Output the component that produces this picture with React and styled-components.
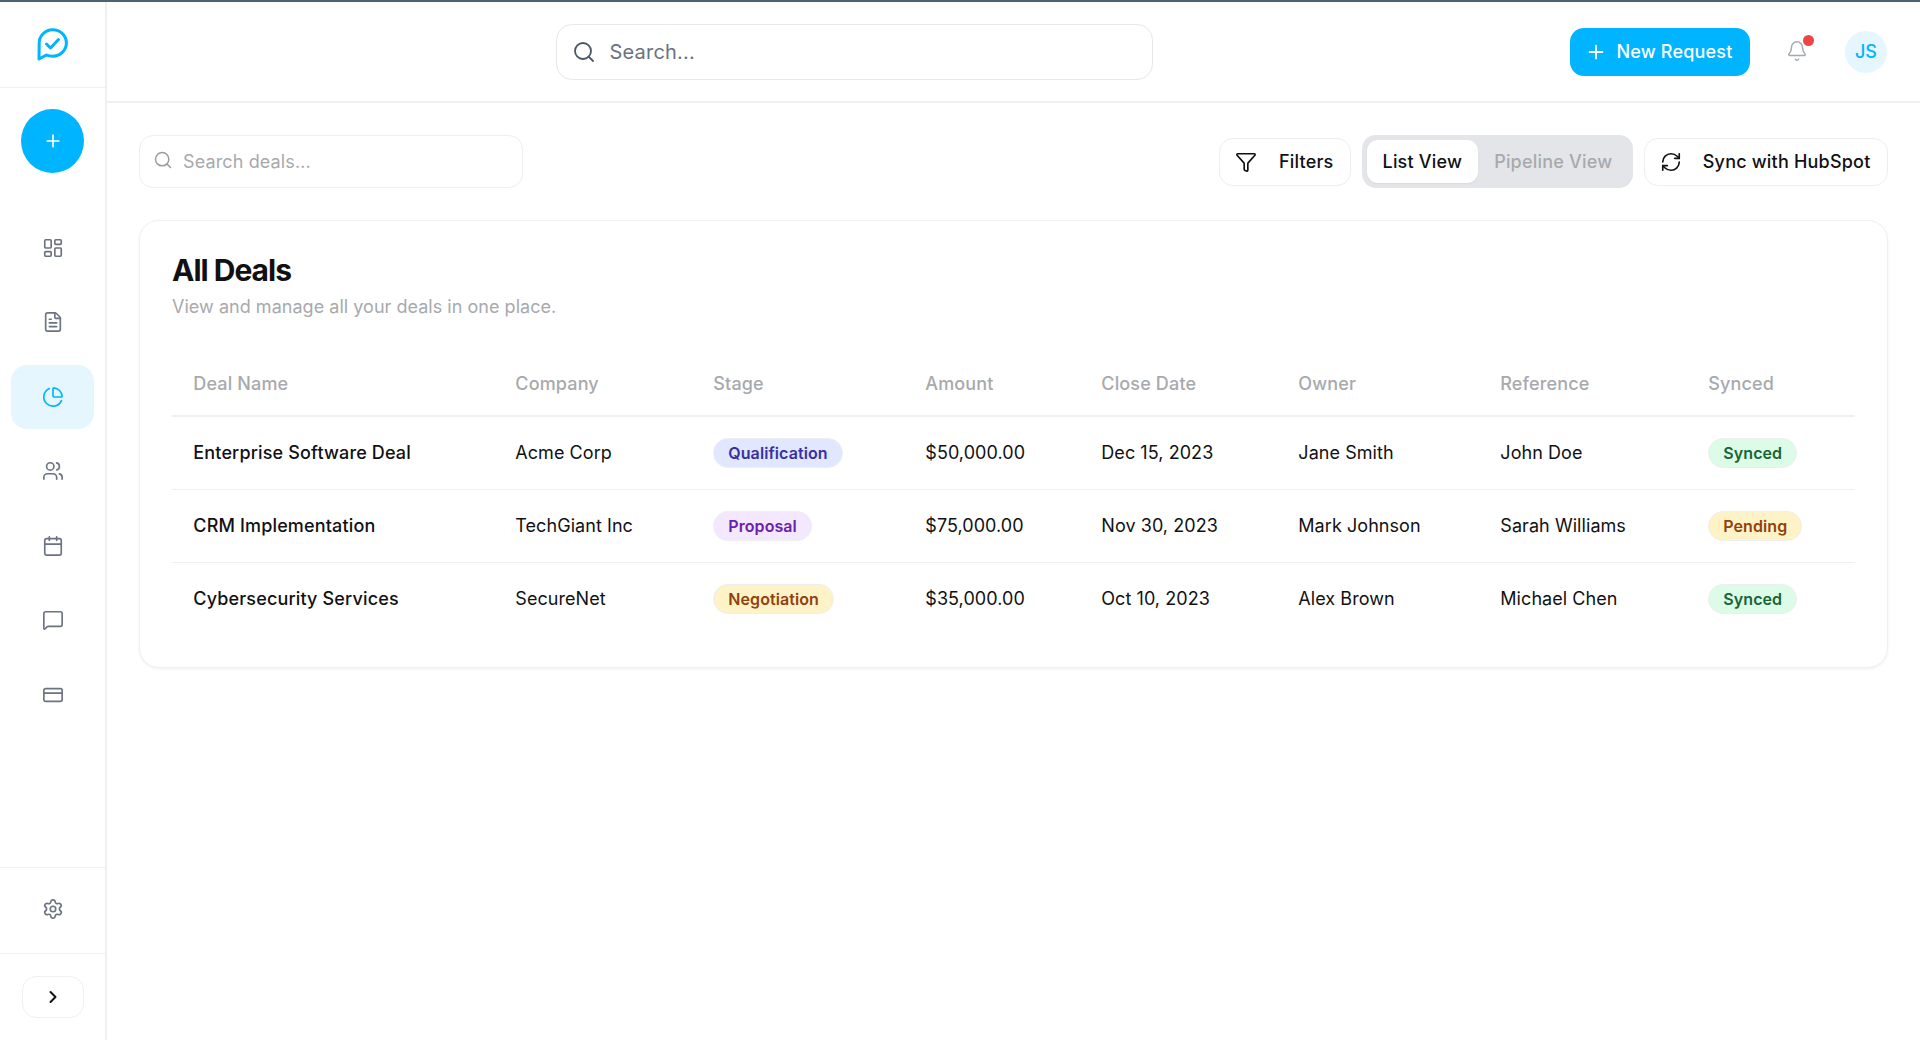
import React from "react";
import styled, { createGlobalStyle } from "styled-components";
import {
  Plus, LayoutDashboard, FileText, ChartPie, Users, Calendar, MessageSquare,
  CreditCard, Settings, ChevronRight, Search, Bell, Funnel, RefreshCw,
} from "lucide-react";

const Global = createGlobalStyle`
  * { box-sizing: border-box; }
  html, body { margin: 0; height: 100%; background: #fff; }
  #root { height: 100%; }
  body { font-family: Inter, "Noto Sans", "Liberation Sans", sans-serif; color: #111113; }
`;

const Page = styled.div`
  height: 1040px;
  display: flex;
  flex-direction: column;
  overflow: hidden;
`;
const TopEdge = styled.div`
  height: 2px;
  flex: none;
  background: #4d6270;
`;
const Body = styled.div`
  flex: 1;
  display: flex;
  min-height: 0;
`;
const Sidebar = styled.aside`
  width: 107px;
  flex: none;
  display: flex;
  flex-direction: column;
  border-right: 2px solid #f0f0f2;
`;
const LogoBox = styled.div`
  height: 86px;
  flex: none;
  display: flex;
  align-items: center;
  justify-content: center;
  padding-right: 2px;
  border-bottom: 1.5px solid #f0f0f2;
`;
const AddCircle = styled.button`
  width: 63px;
  height: 64px;
  margin: 21px auto 0;
  flex: none;
  border: 0;
  border-radius: 50%;
  background: #00b4ff;
  color: #fff;
  display: flex;
  align-items: center;
  justify-content: center;
`;
const Nav = styled.nav`
  flex: 1;
  display: flex;
  flex-direction: column;
  gap: 10.6px;
  padding: 42.5px 11px 0;
`;
const NavItem = styled.a`
  height: 64px;
  flex: none;
  border-radius: 16px;
  display: flex;
  align-items: center;
  justify-content: center;
  color: ${(p) => (p.$active ? "#00b4ff" : "#6b7280")};
  background: ${(p) => (p.$active ? "#e5f6ff" : "transparent")};
`;
const SettingsBox = styled.div`
  height: 87px;
  flex: none;
  display: flex;
  align-items: center;
  justify-content: center;
  padding-bottom: 2px;
  color: #6b7280;
  border-top: 1.5px solid #f0f0f2;
  border-bottom: 1.5px solid #f0f0f2;
`;
const CollapseBox = styled.div`
  height: 86.5px;
  flex: none;
  display: flex;
  align-items: flex-start;
  justify-content: center;
  padding-top: 22px;
`;
const CollapseButton = styled.button`
  width: 62px;
  height: 42px;
  border: 1.5px solid #f0f0f2;
  border-radius: 14px;
  background: #fff;
  color: #111113;
  display: flex;
  align-items: center;
  justify-content: center;
  padding: 0;
`;
const Main = styled.main`
  flex: 1;
  min-width: 0;
  display: flex;
  flex-direction: column;
`;
const Header = styled.header`
  height: 101px;
  flex: none;
  display: flex;
  align-items: center;
  padding: 0 33px 0 448.5px;
  border-bottom: 2px solid #f0f0f2;
`;
const HeaderSearch = styled.label`
  width: 597px;
  height: 56px;
  display: flex;
  align-items: center;
  gap: 14px;
  padding: 0 15px;
  border: 1.5px solid #e8e8eb;
  border-radius: 16px;
  color: #4b5563;
`;
const HeaderInput = styled.input`
  flex: 1;
  min-width: 0;
  border: 0;
  outline: 0;
  background: none;
  padding: 0;
  font: 400 20px Inter, sans-serif;
  letter-spacing: 0.2px;
  &::placeholder { color: #6b7280; opacity: 1; }
`;
const HeaderActions = styled.div`
  margin-left: auto;
  display: flex;
  align-items: center;
`;
const PrimaryButton = styled.button`
  width: 180px;
  height: 48px;
  border: 0;
  border-radius: 14px;
  padding: 0 2px 0 0;
  background: #00b4ff;
  color: #fff;
  font: 500 18px Inter, sans-serif;
  letter-spacing: 0.2px;
  display: flex;
  align-items: center;
  justify-content: center;
  gap: 9px;
`;
const BellWrap = styled.div`
  position: relative;
  width: 24px;
  height: 24px;
  margin: 1px 35px 0 36px;
  color: #a3a7ae;
`;
const RedDot = styled.span`
  position: absolute;
  top: -5px;
  right: -4px;
  width: 11px;
  height: 11px;
  border-radius: 50%;
  background: #ef4444;
`;
const Avatar = styled.div`
  width: 42px;
  height: 42px;
  border-radius: 50%;
  background: #e5f6ff;
  color: #00b4ff;
  font: 500 18px Inter, sans-serif;
  display: flex;
  align-items: center;
  justify-content: center;
`;
const Content = styled.div`
  padding: 32px 32.5px 32px 32px;
  display: flex;
  flex-direction: column;
  gap: 32px;
`;
const Toolbar = styled.div`
  height: 53px;
  display: flex;
  align-items: center;
  justify-content: space-between;
`;
const DealSearch = styled.label`
  width: 384px;
  height: 53px;
  display: flex;
  align-items: center;
  gap: 10px;
  padding: 0 13px 0 13px;
  border: 1.5px solid #eeeef0;
  border-radius: 14px;
  color: #9b9ca1;
  & > svg { margin-top: -4px; }
`;
const DealInput = styled.input`
  flex: 1;
  min-width: 0;
  border: 0;
  outline: 0;
  background: none;
  padding: 0;
  font: 400 18px Inter, sans-serif;
  letter-spacing: 0.12px;
  &::placeholder { color: #a8a9ad; opacity: 1; }
`;
const ToolGroup = styled.div`
  display: flex;
  align-items: center;
  gap: 11px;
`;
const OutlineButton = styled.button`
  height: 48px;
  width: ${(p) => p.$width}px;
  border: 1.5px solid #eeeef0;
  border-radius: 14px;
  background: #fff;
  color: #111113;
  font: 500 18px Inter, sans-serif;
  letter-spacing: 0.2px;
  white-space: nowrap;
  display: flex;
  align-items: center;
  justify-content: space-between;
  padding: 0 16px 0 15.5px;
`;
const Segment = styled.div`
  width: 271px;
  height: 53px;
  padding: 5px;
  border-radius: 14px;
  background: #e4e5e8;
  display: flex;
  align-items: center;
`;
const SegmentTab = styled.button`
  height: 43px;
  flex: none;
  padding: 0 16px;
  border: 0;
  border-radius: 11px;
  background: ${(p) => (p.$active ? "#fff" : "transparent")};
  box-shadow: ${(p) => (p.$active ? "0 1px 2px rgba(0,0,0,.05)" : "none")};
  color: ${(p) => (p.$active ? "#111113" : "#a8a9ad")};
  font: 500 18px Inter, sans-serif;
  letter-spacing: 0.2px;
  white-space: nowrap;
`;
const Card = styled.section`
  height: 448px;
  padding: 32px;
  border: 1.5px solid #f0f0f2;
  border-radius: 20px;
  background: #fff;
  box-shadow: 0 1px 3px rgba(0, 0, 0, 0.06);
`;
const Title = styled.h1`
  margin: 0;
  font: 700 30px/34px Inter, sans-serif;
  letter-spacing: -1px;
  color: #111113;
`;
const Subtitle = styled.p`
  margin: 8px 0 0;
  font: 400 18px/24px Inter, sans-serif;
  letter-spacing: 0.03px;
  color: #a8a9ad;
`;
const Table = styled.table`
  width: 100%;
  margin-top: 33px;
  border-collapse: collapse;
  table-layout: fixed;
`;
const Col = styled.col`
  width: ${(p) => p.$w}px;
`;
const Th = styled.th`
  height: 64px;
  padding: 0 20px 0 21.3px;
  text-align: left;
  font: 500 18px Inter, sans-serif;
  letter-spacing: 0.15px;
  color: #a8a9ad;
  border-bottom: 2px solid #f0f0f2;
`;
const Tr = styled.tr`
  height: 73px;
  & + & td { border-top: 1.5px solid #f0f0f2; }
`;
const Td = styled.td`
  padding: 0 20px 0 21.3px;
  font: ${(p) => (p.$strong ? 500 : 400)} 18px Inter, sans-serif;
  letter-spacing: ${(p) => (p.$strong ? 0.15 : 0.06)}px;
  color: #111113;
  white-space: nowrap;
`;
const tones = {
  blue: ["#e0e7ff", "#3730a3"],
  purple: ["#f3e8ff", "#6b21a8"],
  amber: ["#fef3c7", "#92400e"],
  green: ["#dcfce7", "#166534"],
};
const Badge = styled.span`
  display: inline-flex;
  align-items: center;
  height: 30px;
  padding: 0 14px;
  border-radius: 15px;
  border: 1.5px solid #eeeef0;
  font: 600 16px Inter, sans-serif;
  letter-spacing: 0.08px;
  background: ${(p) => tones[p.$tone][0]};
  color: ${(p) => tones[p.$tone][1]};
`;

const Logo = () => (
  <svg width="32" height="34" viewBox="0 0 32 34" fill="none" stroke="#00b4ff" strokeWidth="3" strokeLinecap="round" strokeLinejoin="round">
    <path d="M3 31 L3.2 15.5 A13.6 13.2 0 1 1 17 28.2 Q13 28.2 10.5 27 Z" />
    <path d="M10.5 16 L14.5 20 L22.5 11.5" />
  </svg>
);

const navItems = [LayoutDashboard, FileText, ChartPie, Users, Calendar, MessageSquare, CreditCard];
const widths = [322, 198, 212, 176, 197, 202, 208, 168];
const heads = ["Deal Name", "Company", "Stage", "Amount", "Close Date", "Owner", "Reference", "Synced"];
const deals = [
  ["Enterprise Software Deal", "Acme Corp", ["Qualification", "blue"], "$50,000.00", "Dec 15, 2023", "Jane Smith", "John Doe", ["Synced", "green"]],
  ["CRM Implementation", "TechGiant Inc", ["Proposal", "purple"], "$75,000.00", "Nov 30, 2023", "Mark Johnson", "Sarah Williams", ["Pending", "amber"]],
  ["Cybersecurity Services", "SecureNet", ["Negotiation", "amber"], "$35,000.00", "Oct 10, 2023", "Alex Brown", "Michael Chen", ["Synced", "green"]],
];

export default function App() {
  return (
    <Page>
      <Global />
      <TopEdge />
      <Body>
        <Sidebar>
          <LogoBox><Logo /></LogoBox>
          <AddCircle aria-label="Add"><Plus size={20} strokeWidth={2} /></AddCircle>
          <Nav>
            {navItems.map((Icon, i) => (
              <NavItem key={i} $active={i === 2}><Icon size={22} strokeWidth={1.8} /></NavItem>
            ))}
          </Nav>
          <SettingsBox><Settings size={22} strokeWidth={1.8} /></SettingsBox>
          <CollapseBox>
            <CollapseButton aria-label="Expand"><ChevronRight size={20} strokeWidth={2.4} /></CollapseButton>
          </CollapseBox>
        </Sidebar>
        <Main>
          <Header>
            <HeaderSearch>
              <Search size={24} strokeWidth={1.8} />
              <HeaderInput placeholder="Search..." />
            </HeaderSearch>
            <HeaderActions>
              <PrimaryButton><Plus size={22} strokeWidth={2} />New Request</PrimaryButton>
              <BellWrap><Bell size={22} strokeWidth={1.6} /><RedDot /></BellWrap>
              <Avatar>JS</Avatar>
            </HeaderActions>
          </Header>
          <Content>
            <Toolbar>
              <DealSearch>
                <Search size={20} strokeWidth={1.8} />
                <DealInput placeholder="Search deals..." />
              </DealSearch>
              <ToolGroup>
                <OutlineButton $width={132}><Funnel size={22} strokeWidth={1.8} />Filters</OutlineButton>
                <Segment>
                  <SegmentTab $active>List View</SegmentTab>
                  <SegmentTab>Pipeline View</SegmentTab>
                </Segment>
                <OutlineButton $width={244}><RefreshCw size={22} strokeWidth={1.8} />Sync with HubSpot</OutlineButton>
              </ToolGroup>
            </Toolbar>
            <Card>
              <Title>All Deals</Title>
              <Subtitle>View and manage all your deals in one place.</Subtitle>
              <Table>
                <colgroup>{widths.map((w, i) => <Col key={i} $w={w} />)}</colgroup>
                <thead>
                  <tr>{heads.map((h) => <Th key={h}>{h}</Th>)}</tr>
                </thead>
                <tbody>
                  {deals.map((d) => (
                    <Tr key={d[0]}>
                      {d.map((c, i) => (
                        <Td key={i} $strong={i === 0}>
                          {Array.isArray(c) ? <Badge $tone={c[1]}>{c[0]}</Badge> : c}
                        </Td>
                      ))}
                    </Tr>
                  ))}
                </tbody>
              </Table>
            </Card>
          </Content>
        </Main>
      </Body>
    </Page>
  );
}
